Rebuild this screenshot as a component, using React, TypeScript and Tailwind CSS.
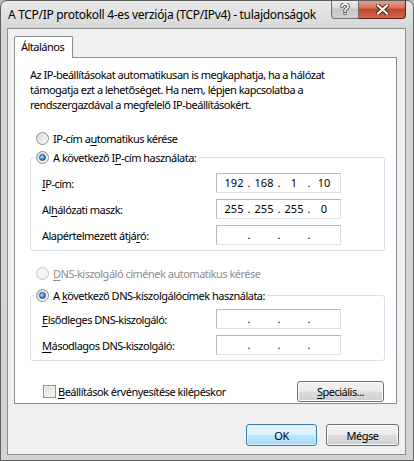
import React from "react";

function Radio({ checked = false, disabled = false }: { checked?: boolean; disabled?: boolean }) {
  return (
    <span
      className={
        "w-[13px] h-[13px] rounded-full border flex items-center justify-center shrink-0 " +
        (disabled
          ? "border-[#c6c6c6] bg-[#f4f4f4]"
          : "border-[#8e8f8f] bg-[linear-gradient(135deg,#d6d6d6,#fbfbfb)]")
      }
    >
      {checked && (
        <span className="w-[7px] h-[7px] rounded-full border border-[#1b4f8a] bg-[radial-gradient(circle_at_35%_35%,#aee0fb,#2a79c4_70%,#1a4f90)]" />
      )}
    </span>
  );
}

function U({ children }: { children: React.ReactNode }) {
  return <span className="underline underline-offset-[2px] decoration-[1px]">{children}</span>;
}

function IpBox({ parts }: { parts: string[] }) {
  return (
    <div className="w-[125px] h-[20px] border border-[#b6b9bf] border-b-[#dfe3e8] border-r-[#d9dde2] bg-white flex items-center pl-[6px] tracking-normal">
      {[0, 1, 2, 3].map((i) => (
        <React.Fragment key={i}>
          <span className="w-[22px] text-center leading-[18px]">{parts[i]}</span>
          {i < 3 && <span className="w-[8px] text-center leading-[18px]">.</span>}
        </React.Fragment>
      ))}
    </div>
  );
}

function Row({ label, parts }: { label: React.ReactNode; parts: string[] }) {
  return (
    <div className="flex items-center h-[20px]">
      <div className="w-[185px] pl-[11px] leading-[15px]">{label}</div>
      <IpBox parts={parts} />
    </div>
  );
}

function WinButton({ children, def = false, className = "" }: { children: React.ReactNode; def?: boolean; className?: string }) {
  return (
    <div
      className={
        "rounded-[3px] border flex items-center justify-center leading-[15px] " +
        (def
          ? "border-[#3c7fb1] bg-[linear-gradient(#eaf6fd_0%,#d9f0fc_49%,#bee6fd_51%,#a7d9f5_100%)] shadow-[inset_0_0_0_1px_#d4eefc]"
          : "border-[#707070] bg-[linear-gradient(#f2f2f2_0%,#ebebeb_49%,#dddddd_51%,#cfcfcf_100%)] shadow-[inset_0_0_0_1px_#fbfbfb]") +
        " " +
        className
      }
    >
      {children}
    </div>
  );
}

export default function App() {
  const empty = ["", "", "", ""];
  return (
    <div className="w-[414px] h-[461px] font-['Noto_Sans',sans-serif] text-[11px] text-black bg-[#bfbfbf]">
      <div className="w-[414px] h-[461px] border border-[#5e5e5e] rounded-t-[7px] bg-[linear-gradient(#e9e9e9,#d6d6d6_30px,#d3d3d3)] flex flex-col overflow-hidden">
        {/* Title bar */}
        <div className="h-[27px] flex items-start shrink-0">
          <div className="pl-[7px] pt-[6px] leading-[16px] whitespace-nowrap text-[12px] tracking-[-0.3px]">
            A TCP/IP protokoll 4-es verziója (TCP/IPv4) - tulajdonságok
          </div>
          <div className="ml-auto mr-[7px] flex mt-[-1px]">
            <div className="w-[28px] h-[19px] rounded-bl-[4px] border border-[#6e6e6e] border-t-0 bg-[linear-gradient(#f1f1f1,#dadada_45%,#c4c4c4_50%,#d2d2d2)] flex items-center justify-center">
              <svg width="10" height="12" viewBox="0 0 10 12">
                <path d="M2 3.5 Q2 1 5 1 Q8 1 8 3.5 Q8 5 6 6 Q5 6.6 5 8" fill="none" stroke="#3a3a3a" strokeWidth="3.4" strokeLinecap="round" />
                <path d="M2 3.5 Q2 1 5 1 Q8 1 8 3.5 Q8 5 6 6 Q5 6.6 5 8" fill="none" stroke="#ffffff" strokeWidth="1.8" strokeLinecap="round" />
                <rect x="3.6" y="9.2" width="2.8" height="2.6" fill="#3a3a3a" />
                <rect x="4.2" y="9.8" width="1.6" height="1.4" fill="#fff" />
              </svg>
            </div>
            <div className="w-[47px] h-[19px] rounded-br-[4px] border border-[#5a1d14] border-t-0 border-l-0 bg-[linear-gradient(#eaa594,#d6705c_45%,#c2432c_52%,#d36a50)] flex items-center justify-center">
              <svg width="13" height="11" viewBox="0 0 13 11">
                <path d="M2 1.5 L11 9.5 M11 1.5 L2 9.5" stroke="#4a1a12" strokeWidth="4" strokeLinecap="square" />
                <path d="M2 1.5 L11 9.5 M11 1.5 L2 9.5" stroke="#ffffff" strokeWidth="2.3" strokeLinecap="square" />
              </svg>
            </div>
          </div>
        </div>

        {/* Client area */}
        <div className="ml-[6px] mr-[7px] h-[427px] border border-[#8d8d8d] bg-[#f0f0f0] flex flex-col pt-[7px] pl-[6px] pr-[6px] shrink-0 tracking-[-0.5px]">
          {/* Tab header */}
          <div className="flex">
            <div className="relative z-10 h-[22px] mb-[-1px] w-[59px] border border-b-0 border-[#898c95] bg-white rounded-t-[2px] pl-[6px] pt-[2px] leading-[15px]">
              Általános
            </div>
          </div>
          {/* Panel */}
          <div className="w-[383px] h-[347px] border border-[#898c95] bg-white pt-[9px] pl-[15px] pr-[11px]">
            <p className="leading-[15px] whitespace-nowrap">
              Az IP-beállításokat automatikusan is megkaphatja, ha a hálózat
              <br />
              támogatja ezt a lehetőséget. Ha nem, lépjen kapcsolatba a
              <br />
              rendszergazdával a megfelelő IP-beállításokért.
            </p>

            <div className="mt-[19px] ml-[6px] flex items-center gap-[4px] h-[15px]">
              <Radio />
              <span className="leading-[15px]">
                IP-cím a<U>u</U>tomatikus kérése
              </span>
            </div>

            <fieldset className="mt-[4px] border border-[#d5dfe5] rounded-[3px] pb-[5px]">
              <legend className="ml-[3px] px-[2px]">
                <span className="flex items-center gap-[4px] h-[15px] leading-[15px]">
                  <Radio checked />
                  <span>
                    A következő I<U>P</U>-cím használata:
                  </span>
                </span>
              </legend>
              <div className="mt-[8px] flex flex-col gap-[6px]">
                <Row label={<><U>I</U>P-cím:</>} parts={["192", "168", "1", "10"]} />
                <Row label={<>Al<U>h</U>álózati maszk:</>} parts={["255", "255", "255", "0"]} />
                <Row label={<>Alapértelmezett átjá<U>r</U>ó:</>} parts={empty} />
              </div>
            </fieldset>

            <div className="mt-[15px] ml-[6px] flex items-center gap-[4px] h-[15px] text-[#8d8d8d]">
              <Radio disabled />
              <span className="leading-[15px]">
                <U>D</U>NS-kiszolgáló címének automatikus kérése
              </span>
            </div>

            <fieldset className="mt-[7px] border border-[#d5dfe5] rounded-[3px] pb-[5px]">
              <legend className="ml-[3px] px-[2px]">
                <span className="flex items-center gap-[4px] h-[15px] leading-[15px]">
                  <Radio checked />
                  <span>
                    A <U>k</U>övetkező DNS-kiszolgálócímek használata:
                  </span>
                </span>
              </legend>
              <div className="mt-[6px] flex flex-col gap-[6px]">
                <Row label={<><U>E</U>lsődleges DNS-kiszolgáló:</>} parts={empty} />
                <Row label={<><U>M</U>ásodlagos DNS-kiszolgáló:</>} parts={empty} />
              </div>
            </fieldset>

            <div className="mt-[20px] flex items-center justify-between pr-[1px]">
              <div className="ml-[13px] flex items-center gap-[2px]">
                <span className="w-[13px] h-[13px] border border-[#8e8f8f] bg-[linear-gradient(135deg,#d9d9d9,#fbfbfb)] shadow-[inset_0_0_0_1px_#f4f4f4]" />
                <span className="leading-[15px]">
                  <U>B</U>eállítások érvényesítése kilépéskor
                </span>
              </div>
              <WinButton className="w-[87px] h-[21px]">
                <span>
                  <U>S</U>peciális...
                </span>
              </WinButton>
            </div>
          </div>

          {/* Bottom buttons */}
          <div className="mt-[20px] flex justify-end gap-[9px]">
            <WinButton def className="w-[71px] h-[22px]">OK</WinButton>
            <WinButton className="w-[73px] h-[22px]">Mégse</WinButton>
          </div>
        </div>
      </div>
    </div>
  );
}
